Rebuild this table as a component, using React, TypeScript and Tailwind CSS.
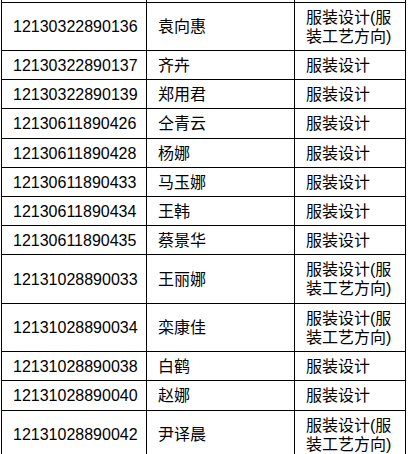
const rows: { id: string; name: string; major: string; wrap: boolean; h: string }[] = [
  { id: "12130322890136", name: "袁向惠", major: "", wrap: true, h: "h-[48px]" },
  { id: "12130322890137", name: "齐卉", major: "服装设计", wrap: false, h: "h-[29px]" },
  { id: "12130322890139", name: "郑用君", major: "服装设计", wrap: false, h: "h-[29px]" },
  { id: "12130611890426", name: "仝青云", major: "服装设计", wrap: false, h: "h-[30px]" },
  { id: "12130611890428", name: "杨娜", major: "服装设计", wrap: false, h: "h-[29px]" },
  { id: "12130611890433", name: "马玉娜", major: "服装设计", wrap: false, h: "h-[29px]" },
  { id: "12130611890434", name: "王韩", major: "服装设计", wrap: false, h: "h-[29px]" },
  { id: "12130611890435", name: "蔡景华", major: "服装设计", wrap: false, h: "h-[29px]" },
  { id: "12131028890033", name: "王丽娜", major: "", wrap: true, h: "h-[49px]" },
  { id: "12131028890034", name: "栾康佳", major: "", wrap: true, h: "h-[48px]" },
  { id: "12131028890038", name: "白鹤", major: "服装设计", wrap: false, h: "h-[29px]" },
  { id: "12131028890040", name: "赵娜", major: "服装设计", wrap: false, h: "h-[30px]" },
  { id: "12131028890042", name: "尹译晨", major: "", wrap: true, h: "h-[48px]" },
];

export default function App() {
  return (
    <div className="w-[410px] h-[454px] overflow-hidden bg-white">
      <div
        className="ml-[1px] w-[405px] border-x border-black text-[16px] text-black"
        style={{ fontFamily: "'Liberation Sans', 'Noto Sans CJK SC', sans-serif" }}
      >
        {/* sliver of the row above, cut off by the crop */}
        <div className="flex h-[3px] border-b border-black">
          <div className="w-[145px] border-r border-black" />
          <div className="w-[148px] border-r border-black" />
          <div className="w-[110px]" />
        </div>
        {rows.map((r) => (
          <div key={r.id} className={`flex border-b border-black ${r.h}`}>
            <div className="w-[145px] shrink-0 flex items-center pl-[11px] border-r border-black leading-[19px]">
              {r.id}
            </div>
            <div className="w-[148px] shrink-0 flex items-center pl-[11px] border-r border-black leading-[19px]">
              {r.name}
            </div>
            <div className="w-[110px] shrink-0 flex items-center pl-[11px] leading-[19px] whitespace-nowrap">
              {r.wrap ? (
                <span>
                  服装设计(服
                  <br />
                  装工艺方向)
                </span>
              ) : (
                r.major
              )}
            </div>
          </div>
        ))}
      </div>
    </div>
  );
}
